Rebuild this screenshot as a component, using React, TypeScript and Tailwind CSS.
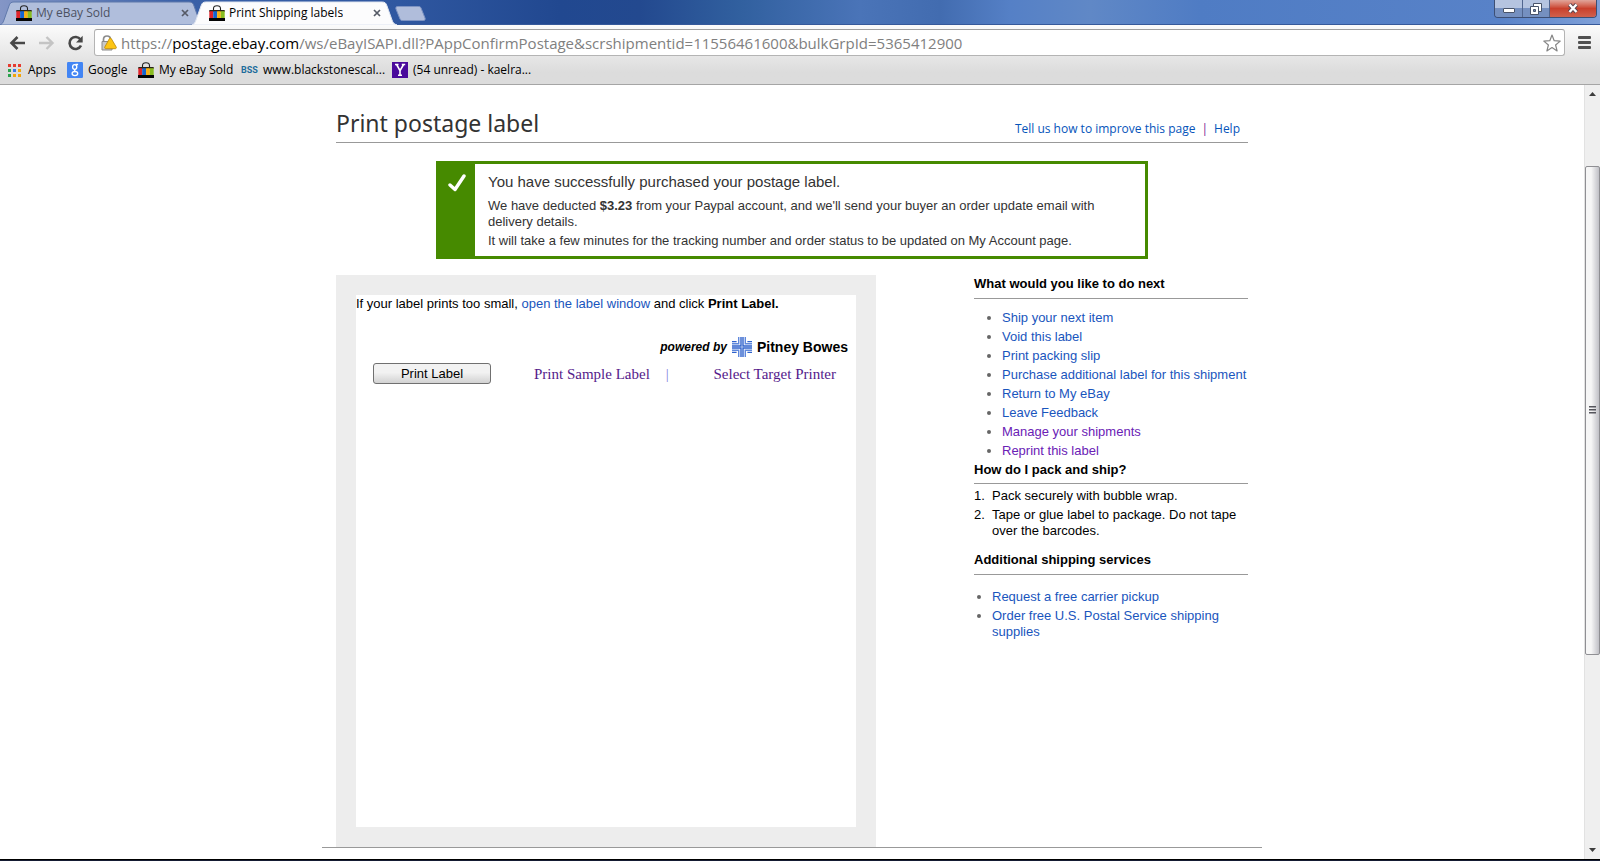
import React from "react";

function EbayIcon() {
  return (
    <svg viewBox="0 0 16 16" className="h-4 w-4 shrink-0" aria-hidden="true">
      <path d="M4.500 5.500V3.600C4.500 1.700 6 .7 8 .7s3.500 1 3.500 2.900v1.900" fill="none" stroke="#222" strokeWidth="1.100" />
      <path d="M0.300 5h15.400v2H.3z" fill="#2a2418" />
      <path d="M0.300 6.200h3.900V13H.3z" fill="#e0242a" />
      <path d="M4.200 6.200h3.900V13H4.200z" fill="#1464d0" />
      <path d="M8.100 6.200h3.700V13H8.100z" fill="#f8b010" />
      <path d="M11.800 6.200h3.900V13h-3.900z" fill="#88bc20" />
      <path d="M0 13h16v3H0z" fill="#050505" />
    </svg>
  );
}

function GoogleIcon() {
  return (
    <svg viewBox="0 0 16 16" className="h-4 w-4 shrink-0" aria-hidden="true">
      <rect width="16" height="16" rx="1.200" fill="#4285f4" />
      <g fill="none" stroke="#fff" strokeWidth="1.300">
        <ellipse cx="7.700" cy="5" rx="2.100" ry="2.400" />
        <path d="M8.500 2.500h2.600M8.600 7.300c-1.500.7-1.400 1.500-.2 2.100" />
        <ellipse cx="7.900" cy="11.600" rx="2.800" ry="2.100" />
      </g>
    </svg>
  );
}

const appColours = ["#e53b30", "#e53b30", "#e53b30", "#2ba24c", "#3b78e7", "#f2a50c", "#2ba24c", "#f2a50c", "#f2a50c"];

function AppsIcon() {
  return (
    <svg viewBox="0 0 13 13" className="h-[13px] w-[13px] shrink-0" aria-hidden="true">
      {appColours.map((c, i) => (
        <rect key={i} x={(i % 3) * 5} y={Math.floor(i / 3) * 5} width="3" height="3" fill={c} />
      ))}
    </svg>
  );
}

function YahooIcon() {
  return (
    <svg viewBox="0 0 16 16" className="h-4 w-4 shrink-0" aria-hidden="true">
      <rect width="16" height="16" fill="#4a0a9c" />
      <path d="M3 2.500h3.500M9.800 2.500h3.400M4.600 2.500 8 8.600l3.600-6.100M8 8.400v5M6 13.300h4" fill="none" stroke="#fff" strokeWidth="1.600" />
    </svg>
  );
}

function Tab({ title, active }: { title: string; active?: boolean }) {
  return (
    <div className={active ? "relative z-10 -ml-3 flex h-6 w-[205px] items-center pr-3 pl-[17px]" : "relative flex h-6 w-[204px] items-center pr-[11px] pl-4"}>
      <svg viewBox="0 0 205 24" preserveAspectRatio="none" className="absolute inset-0 h-full w-full" aria-hidden="true">
        <path
          d="M0 24c2-1 3-2 4-5L9 5c1-3 2-4 5-4h176c3 0 4 1 5 4l5 14c1 3 2 4 5 5z"
          fill={active ? "#fcfcfd" : "#b0bedc"}
          stroke={active ? "#dfe5f0" : "#5f78ab"}
          strokeWidth="1"
        />
      </svg>
      <button className="relative flex min-w-0 flex-1 items-center gap-1 text-left">
        <EbayIcon />
        <span className={active ? "truncate text-black" : "truncate text-[#4c5263]"}>{title}</span>
      </button>
      <button aria-label={`Close ${title}`} className="relative flex h-4 w-4 items-center justify-center">
        <svg viewBox="0 0 8 8" className="h-2 w-2">
          <path d="M1 1l6 6M7 1 1 7" stroke="#555a66" strokeWidth="1.700" />
        </svg>
      </button>
    </div>
  );
}

function TitleBar() {
  return (
    <div className="flex h-[25px] items-start border-b border-[#36599a] bg-[linear-gradient(90deg,#8496c6_0px,#3a61a8_180px,#2f57a0_400px,#214890_560px,#23498f_640px,#31609f_740px,#4a74b8_860px,#426cb0_940px,#5580c6_1010px,#6088c6_1090px,#4f7cc4_1200px,#5882c8_1500px,#7fa0d8_1600px)]">
      <div className="flex h-[25px] items-end">
        <Tab title="My eBay Sold" />
        <Tab title="Print Shipping labels" active />
        <button aria-label="New tab" className="-ml-[2px] mb-1 h-[15px] w-[31px]">
          <svg viewBox="0 0 31 15" className="h-full w-full">
            <path d="M2.500.5h21c1.500 0 2 .5 2.500 1.500l4 10c.5 1.500 0 2.500-1.500 2.500h-21c-1.500 0-2-.5-2.500-1.500L1 3C.5 1.500 1 .5 2.500.5z" fill="#b0bddb" stroke="#7d93c2" />
          </svg>
        </button>
      </div>
      <div className="mr-[3px] ml-auto flex h-[18px] overflow-hidden rounded-b-[4px] border border-t-0 border-[#3d4f74]">
        <button aria-label="Minimize" className="flex w-7 items-end justify-center border-r border-[#51668f] bg-linear-to-b from-[#b5c4e0] from-50% to-[#7590c0] to-50% pb-1">
          <svg viewBox="0 0 12 5" className="h-[5px] w-3"><rect x=".5" y=".5" width="11" height="4" rx=".5" fill="#fff" stroke="#49546a" /></svg>
        </button>
        <button aria-label="Restore" className="flex w-[27px] items-center justify-center border-r border-[#51668f] bg-linear-to-b from-[#b5c4e0] from-50% to-[#7590c0] to-50%">
          <svg viewBox="0 0 12 12" className="h-3 w-3" fill="#fff" stroke="#49546a">
            <path d="M3.500.5h8v8h-8z" />
            <path d="M.5 3.500h8v8h-8z" />
            <path d="M3.500 6.500h2v2h-2z" fill="#6f86b2" />
          </svg>
        </button>
        <button aria-label="Close window" className="flex w-[46px] items-center justify-center bg-linear-to-b from-[#e0a59b] from-0% via-[#c9402c] via-50% to-[#d0604c]">
          <svg viewBox="0 0 12 11" className="h-[11px] w-3">
            <path d="M2.500 1.500 9.500 9M9.500 1.500 2.500 9" stroke="#5a4550" strokeWidth="4.200" />
            <path d="M2.500 1.500 9.500 9M9.500 1.500 2.500 9" stroke="#fff" strokeWidth="2.400" />
          </svg>
        </button>
      </div>
    </div>
  );
}

function Toolbar() {
  return (
    <div className="flex h-[31px] items-center pt-1 pr-[9px] pl-[9px]">
      <button aria-label="Back" className="h-4 w-[17px]">
        <svg viewBox="0 0 17 16" className="h-full w-full" fill="none" stroke="#484848" strokeWidth="2.600">
          <path d="M16 8H3M8.500 2 2.500 8l6 6" />
        </svg>
      </button>
      <button aria-label="Forward" className="ml-3 h-4 w-[17px]">
        <svg viewBox="0 0 17 16" className="h-full w-full" fill="none" stroke="#c4c4c4" strokeWidth="2.400">
          <path d="M1 8h13M8.500 2l6 6-6 6" />
        </svg>
      </button>
      <button aria-label="Reload" className="ml-3 h-4 w-[17px]">
        <svg viewBox="0 0 17 16" className="h-full w-full">
          <path d="M13.500 4.500A6 6 0 1 0 14 10.500" fill="none" stroke="#484848" strokeWidth="2.600" />
          <path d="M15.700.8v6.700H9z" fill="#484848" />
        </svg>
      </button>
      <div className="ml-[10px] flex h-[27px] flex-1 items-center rounded-[3px] border border-[#b4b4b4] border-t-[#a0a0a0] bg-white pr-[3px] pl-[6px]">
        <svg viewBox="0 0 16 16" className="h-4 w-4 shrink-0" aria-hidden="true">
          <path d="M2.500 7V4.500C2.500 2.500 3.900 1 6 1s3.500 1.500 3.500 3.500V7" fill="none" stroke="#8b8b8b" strokeWidth="1.700" />
          <path d="M1 6.500h10v8.500H1z" fill="#c9c9c9" stroke="#8b8b8b" />
          <path d="M8.300 3.800c.6-1 1.500-1 2.100 0l4.800 8.200c.4 1-.1 1.700-1 1.700H4.800c-.9 0-1.400-.7-1-1.700z" fill="#fdc514" stroke="#b98708" strokeWidth=".8" />
        </svg>
        <button className="ml-1 flex-1 truncate text-left text-[15px] leading-6 text-[#808080]" aria-label="Address">
          https://<span className="text-black">postage.ebay.com</span>/ws/eBayISAPI.dll?PAppConfirmPostage&amp;scrshipmentid=11556461600&amp;bulkGrpId=5365412900
        </button>
        <button aria-label="Bookmark this page" className="h-[18px] w-[18px]">
          <svg viewBox="0 0 18 18" className="h-full w-full">
            <path d="M9 1l2.200 5.700 6 .4-4.600 3.900 1.500 5.900L9 13.600 3.900 16.900 5.400 11 .8 7.100l6-.4z" fill="#fff" stroke="#858585" strokeWidth="1.200" strokeLinejoin="round" />
          </svg>
        </button>
      </div>
      <button aria-label="Menu" className="ml-[13px] h-[13px] w-[13px]">
        <svg viewBox="0 0 13 13" className="h-full w-full" fill="#505050">
          <rect width="13" height="3" rx="1" />
          <rect y="5" width="13" height="3" rx="1" />
          <rect y="10" width="13" height="3" rx="1" />
        </svg>
      </button>
    </div>
  );
}

function Bookmarks() {
  return (
    <nav aria-label="Bookmarks" className="flex h-7 items-center pl-2 text-black">
      <a href="#apps" className="flex w-[59px] items-center gap-[7px]"><AppsIcon />Apps</a>
      <a href="#google" className="flex w-[71px] items-center gap-[5px]"><GoogleIcon />Google</a>
      <a href="#sold" className="flex w-[103px] items-center gap-[5px]"><EbayIcon />My eBay Sold</a>
      <a href="#bss" className="flex w-[151px] items-center gap-[5px]">
        <span className="w-[17px] font-['Roboto',sans-serif] text-[9px] font-bold text-[#1c6c9c]">BSS</span>www.blackstonescal...
      </a>
      <a href="#mail" className="flex items-center gap-[5px]"><YahooIcon />(54 unread) - kaelra...</a>
    </nav>
  );
}

function ScrollBar() {
  return (
    <div className="flex w-4 shrink-0 flex-col border-l border-[#e2e2e2] bg-[#efefef]">
      <button aria-label="Scroll up" className="flex h-[18px] items-center justify-center">
        <svg viewBox="0 0 7 4" className="h-1 w-[7px]"><path d="M0 4 3.500 0 7 4z" fill="#3c3c3c" /></svg>
      </button>
      <div className="flex-[63]" />
      <div className="flex flex-[488] items-center justify-center rounded-[2px] border border-[#8f8f93] bg-linear-to-r from-[#f6f6f6] from-40% to-[#c0c0c6]">
        <svg viewBox="0 0 7 8" className="h-2 w-[7px]" fill="#55555c">
          <path d="M0 0h7v1.500H0zM0 3h7v1.500H0zM0 6h7v1.500H0z" />
        </svg>
      </div>
      <div className="flex-[187]" />
      <button aria-label="Scroll down" className="flex h-[18px] items-center justify-center">
        <svg viewBox="0 0 7 4" className="h-1 w-[7px]"><path d="M0 0h7L3.500 4z" fill="#3c3c3c" /></svg>
      </button>
    </div>
  );
}

function SuccessNotice() {
  return (
    <section className="mx-[100px] mt-[18px] flex border-[3px] border-[#468a00] text-[#333]">
      <div className="w-9 shrink-0 bg-[#468a00] pt-[10px] pl-[9px]">
        <svg viewBox="0 0 18 18" className="h-[18px] w-[18px]" aria-hidden="true">
          <path d="M2 11l5 4.500L16 2" fill="none" stroke="#fff" strokeWidth="3.400" strokeLinecap="round" strokeLinejoin="round" />
        </svg>
      </div>
      <div className="pt-2 pr-8 pb-[7px] pl-[13px]">
        <h2 className="text-[15px] leading-5">You have successfully purchased your postage label.</h2>
        <p className="mt-[6px] leading-4">
          We have deducted <b>$3.23</b> from your Paypal account, and we'll send your buyer an order update email with delivery details.
        </p>
        <p className="mt-[3px] leading-4">It will take a few minutes for the tracking number and order status to be updated on My Account page.</p>
      </div>
    </section>
  );
}

function PitneyLogo() {
  return (
    <svg viewBox="0 0 20 20" className="h-5 w-5" aria-hidden="true" fill="none" stroke="#2f62cc" strokeWidth="1.400">
      <path d="M9 0v9H0M9 20v-9H0M11 0v9h9M11 20v-9h9" />
      <path d="M6.700 0v6.700H0M6.700 20v-6.700H0M13.300 0v6.700H20M13.300 20v-6.700H20" stroke="#5f88dc" />
      <path d="M0 4.600h4.600M0 15.400h4.600M15.400 4.600H20M15.400 15.400H20" />
    </svg>
  );
}

function LabelPanel() {
  return (
    <section className="w-[540px] bg-[#ededed] p-5">
      <div className="min-h-[532px] bg-white pt-px text-black">
        <p className="leading-4">
          If your label prints too small, <a href="#window" className="text-[#1955bd]">open the label window</a> and click <b>Print Label.</b>
        </p>
        <div className="mt-[25px] flex items-center justify-end gap-[5px] pr-2 font-bold">
          <i className="text-xs">powered by</i>
          <PitneyLogo />
          <span className="text-sm">Pitney Bowes</span>
        </div>
        <div className="mt-[6px] flex items-center pr-5 pl-[17px] font-['Liberation_Serif',serif] text-[15px] leading-5 text-[#551a8b]">
          <button className="h-[21px] w-[118px] rounded-[3px] border border-[#707070] bg-linear-to-b from-[#f2f2f2] from-45% to-[#d2d2d2] font-['Liberation_Sans',sans-serif] text-[13px] leading-4 text-black">
            Print Label
          </button>
          <a href="#sample" className="ml-[43px]">Print Sample Label</a>
          <span className="ml-4 text-[#8080e0]">|</span>
          <a href="#printer" className="ml-auto">Select Target Printer</a>
        </div>
      </div>
    </section>
  );
}

const nextSteps = [
  { text: "Ship your next item" },
  { text: "Void this label" },
  { text: "Print packing slip" },
  { text: "Purchase additional label for this shipment" },
  { text: "Return to My eBay" },
  { text: "Leave Feedback" },
  { text: "Manage your shipments", visited: true },
  { text: "Reprint this label", visited: true },
];

const packingSteps = ["Pack securely with bubble wrap.", "Tape or glue label to package. Do not tape over the barcodes."];

function SidePanel() {
  return (
    <aside className="w-[274px] pt-px leading-4">
      <h2 className="border-b border-[#999] pb-[6px] font-bold text-black">What would you like to do next</h2>
      <ul className="mt-[11px] list-disc pl-7 marker:text-[#666]">
        {nextSteps.map((s) => (
          <li key={s.text} className="mb-[3px] whitespace-nowrap">
            <a href="#next" className={s.visited ? "text-[#6a21b5]" : "text-[#1955bd]"}>{s.text}</a>
          </li>
        ))}
      </ul>
      <h2 className="border-b border-[#999] pb-[5px] font-bold text-black">How do I pack and ship?</h2>
      <ol className="mt-1 flex flex-col gap-[3px] text-black">
        {packingSteps.map((step, i) => (
          <li key={step} className="flex">
            <span className="w-[18px] shrink-0">{i + 1}.</span>
            <span>{step}</span>
          </li>
        ))}
      </ol>
      <h2 className="mt-[13px] border-b border-[#999] pb-[6px] font-bold text-black">Additional shipping services</h2>
      <ul className="mt-[14px] list-disc pl-[18px] text-[#1955bd] marker:text-[#666]">
        <li className="mb-[3px]"><a href="#pickup">Request a free carrier pickup</a></li>
        <li><a href="#supplies">Order free U.S. Postal Service shipping supplies</a></li>
      </ul>
    </aside>
  );
}

export default function App() {
  return (
    <div className="flex h-screen flex-col bg-white font-['Open_Sans',sans-serif] text-xs">
      <TitleBar />
      <div className="border-b border-[#a5a5a5] bg-linear-to-b from-[#fbfbfb] to-[#dcdcdc] to-80%">
        <Toolbar />
        <Bookmarks />
      </div>
      <div className="flex min-h-0 flex-1">
        <main className="min-w-0 flex-1 overflow-hidden font-['Liberation_Sans',Arial,sans-serif] text-[13px]">
          <div className="mx-auto max-w-[940px] border-b border-[#999] px-[14px]">
            <header className="flex h-[58px] items-end justify-between border-b border-[#999] pr-2">
              <h1 className="pb-[5px] font-['Noto_Sans',sans-serif] text-[23px] leading-7 text-[#333]">Print postage label</h1>
              <div className="flex gap-[6px] pb-1 font-['Open_Sans',sans-serif] text-xs leading-[18px] text-[#7a2090]">
                <a href="#feedback" className="text-[#0654ba]">Tell us how to improve this page</a>|
                <a href="#help" className="text-[#0654ba]">Help</a>
              </div>
            </header>
            <SuccessNotice />
            <div className="mt-4 flex items-start justify-between">
              <LabelPanel />
              <SidePanel />
            </div>
          </div>
        </main>
        <ScrollBar />
      </div>
      <div className="h-[2px] shrink-0 border-t border-black bg-[#151c33]" />
    </div>
  );
}
